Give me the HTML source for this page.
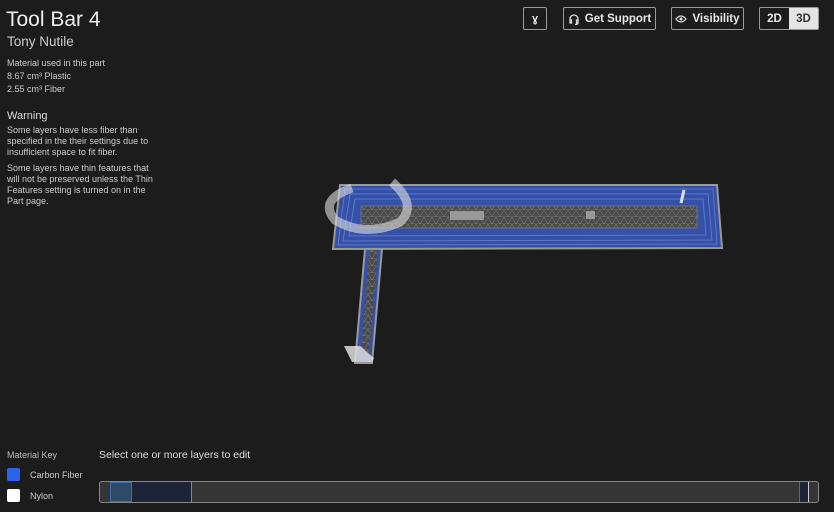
<!DOCTYPE html>
<html><head><style>
body{margin:0;width:834px;height:512px;background:#1c1c1c;font-family:"Liberation Sans",sans-serif;color:#ddd;position:relative;overflow:hidden}
.a{position:absolute;white-space:nowrap}
.btn{position:absolute;top:7px;height:23px;border:1px solid #9a9a9a;border-radius:2px;box-sizing:border-box;color:#e8e8e8;font-size:11.5px;font-weight:bold;display:flex;align-items:center;justify-content:center}
</style></head><body>
<div class="a" style="left:6px;top:8px;font-size:21px;color:#eee">Tool Bar 4</div>
<div class="a" style="left:7px;top:34px;font-size:13.5px;color:#ccc">Tony Nutile</div>
<div class="a" style="left:7px;top:57px;font-size:9px;line-height:13px;color:#ccc">Material used in this part<br>8.67 cm³ Plastic<br>2.55 cm³ Fiber</div>
<div class="a" style="left:7px;top:110px;font-size:11px;color:#ddd">Warning</div>
<div class="a" style="left:7px;top:125px;font-size:9px;line-height:11px;color:#ccc">Some layers have less fiber than<br>specified in the their settings due to<br>insufficient space to fit fiber.</div>
<div class="a" style="left:7px;top:163px;font-size:9px;line-height:11px;color:#ccc">Some layers have thin features that<br>will not be preserved unless the Thin<br>Features setting is turned on in the<br>Part page.</div>

<div class="btn" style="left:523px;width:24px;font-size:11px">ɣ</div>
<div class="btn" style="left:563px;width:93px"><svg width="12" height="12" viewBox="0 0 12 12" style="margin-right:5px"><path d="M2 8V6a4 4 0 0 1 8 0v2M2 7h1.5v3H2zM8.5 7H10v3H8.5zM10 10q0 1.5-3 1.5" stroke="#ddd" fill="none" stroke-width="1.3"/></svg>Get Support</div>
<div class="btn" style="left:671px;width:73px"><svg width="12" height="8" viewBox="0 0 12 8" style="margin-right:5px"><path d="M1 4Q6-2 11 4Q6 10 1 4z" stroke="#ddd" fill="none" stroke-width="1.2"/><circle cx="6" cy="4" r="1.5" fill="#ddd"/></svg>Visibility</div>
<div class="btn" style="left:759px;width:60px;justify-content:flex-start;overflow:hidden"><span style="width:29px;text-align:center">2D</span><span style="flex:1;height:100%;background:#e4e4e4;color:#333;display:flex;align-items:center;justify-content:center">3D</span></div>

<svg class="a" style="left:0;top:0" width="834" height="512">
<defs><pattern id="m" width="8" height="7" patternUnits="userSpaceOnUse"><path d="M0 0L4 7L8 0M0 7H8" stroke="#888" stroke-width="0.5" fill="none"/></pattern></defs>
<polygon points="340,185 717,185 722,248 333,249" fill="#3450a8" stroke="#999" stroke-width="2"/>
<polygon points="345,189 713,189 717,244 338,245" fill="none" stroke="#5c78c8" stroke-width="1"/>
<polygon points="350,194 708,194 712,240 343,241" fill="none" stroke="#5c78c8" stroke-width="1"/>
<polygon points="355,199 703,199 706,235 349,236" fill="none" stroke="#5c78c8" stroke-width="1"/>
<rect x="361" y="206" width="336" height="22" fill="#4a4a4a"/>
<rect x="361" y="206" width="336" height="22" fill="url(#m)" stroke="#777" stroke-width="0.8"/>
<polygon points="365,249 382,249 372,363 355,363" fill="#3450a8" stroke="#999" stroke-width="2"/>
<polygon points="369,250 378,250 369,355 361,355" fill="#4a4a4a"/>
<polygon points="369,250 378,250 369,355 361,355" fill="url(#m)"/>
<polygon points="344,346 360,346 374,358 372,362 352,362" fill="#ddd" opacity="0.85"/>
<path d="M352,188 Q318,200 335,220 Q365,238 400,222 Q418,205 392,182" fill="none" stroke="#ddd" stroke-width="9" opacity="0.6"/>
<rect x="450" y="211" width="34" height="9" fill="#aaa" opacity="0.8"/>
<rect x="586" y="211" width="9" height="8" fill="#aaa" opacity="0.8"/>
<path d="M684 190 L681 203" stroke="#ddd" stroke-width="3"/>
</svg>

<div class="a" style="left:7px;top:450px;font-size:9px;color:#bbb">Material Key</div>
<div class="a" style="left:7px;top:468px;width:13px;height:13px;background:#2a63f0;border-radius:2px"></div>
<div class="a" style="left:30px;top:470px;font-size:9px;color:#ccc">Carbon Fiber</div>
<div class="a" style="left:7px;top:489px;width:13px;height:13px;background:#fff;border-radius:2px"></div>
<div class="a" style="left:30px;top:491px;font-size:9px;color:#ccc">Nylon</div>
<div class="a" style="left:99px;top:449px;font-size:10.5px;color:#ddd">Select one or more layers to edit</div>

<div class="a" style="left:99px;top:481px;width:720px;height:22px;box-sizing:border-box;border:1px solid #888;border-radius:3px;background:#353535;overflow:hidden">
<div class="a" style="left:10px;top:0;width:22px;height:20px;background:#2f4a66;border:1px solid #3f6ab0;box-sizing:border-box"></div>
<div class="a" style="left:32px;top:0;width:59px;height:20px;background:#1c2436;border-right:1px solid #888"></div>
<div class="a" style="left:699px;top:0;width:8px;height:20px;background:#1c2436;border-left:1px solid #3f6ab0;border-right:1px solid #ccc"></div>
</div>
</body></html>
